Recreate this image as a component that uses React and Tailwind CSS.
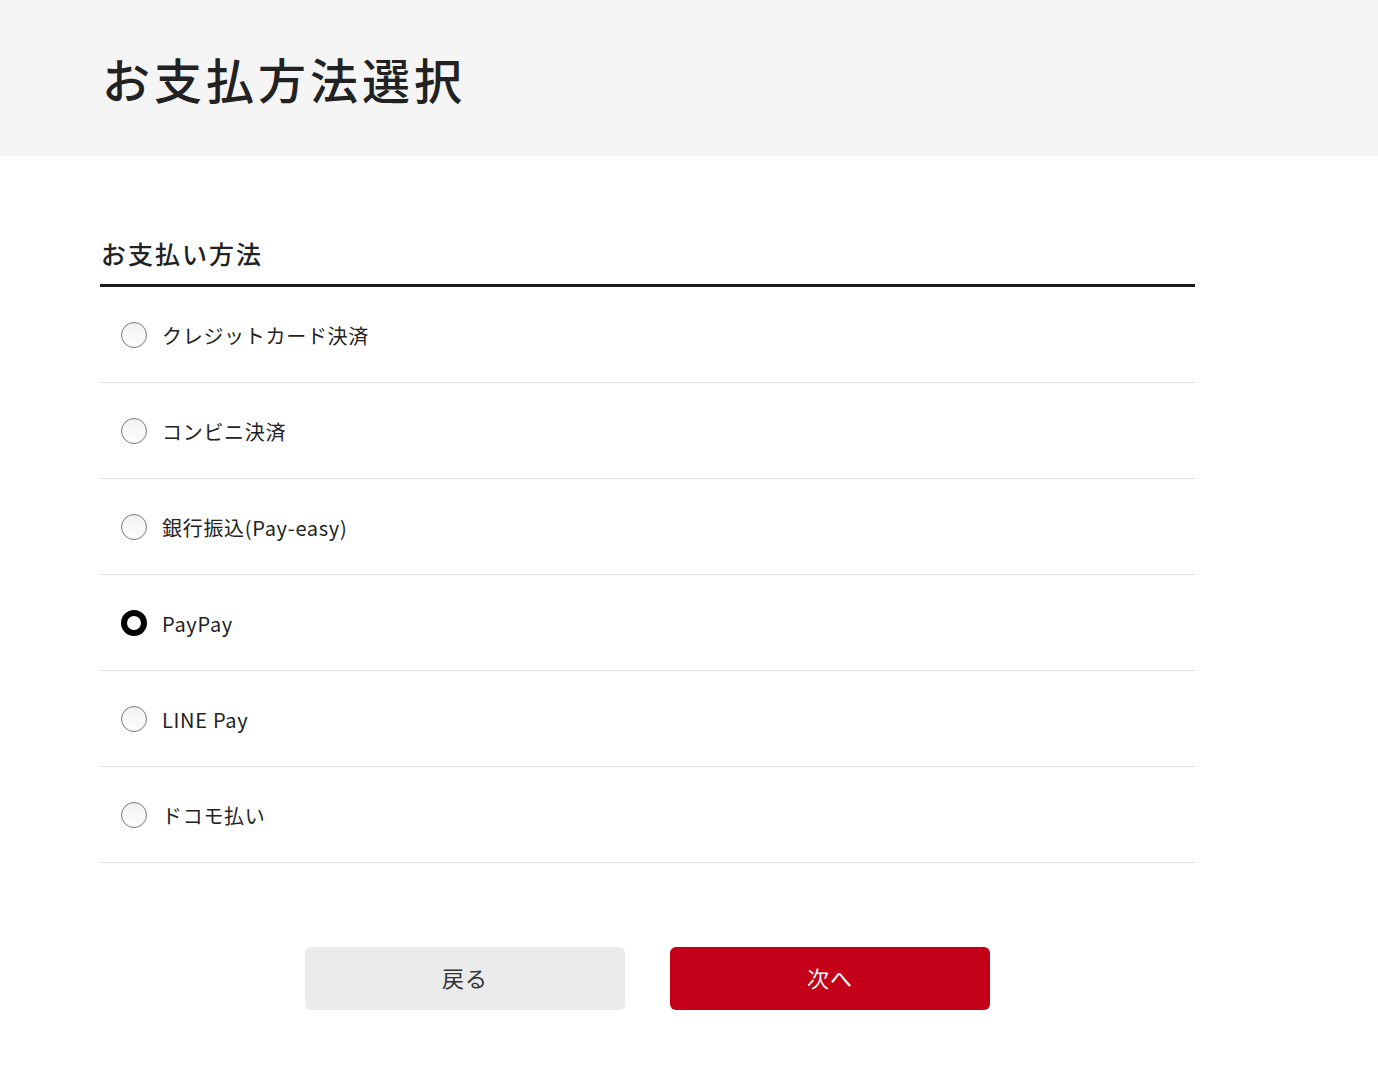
import { useState } from 'react';

const methods = [
  'クレジットカード決済',
  'コンビニ決済',
  '銀行振込(Pay-easy)',
  'PayPay',
  'LINE Pay',
  'ドコモ払い',
];

const App = () => {
  const [selected, setSelected] = useState('PayPay');

  return (
    <div className="min-h-screen bg-white text-[#222] font-['Noto_Sans_CJK_JP','Noto_Sans',sans-serif]">
      <header className="h-[156px] bg-[#f5f5f5] flex items-center pl-[102px]">
        <h1 className="text-[48px] font-medium tracking-[4px] leading-none">お支払方法選択</h1>
      </header>

      <main className="w-[1095px] ml-[100px] pt-[81px] pb-[71px]">
        <h2 className="text-[25px] leading-8 tracking-[2px] pb-[15px] pl-[1px] font-medium border-b-[3px] border-[#1c1c1c]">お支払い方法</h2>

        <div>
          {methods.map((m) => {
            const checked = selected === m;
            return (
              <label
                key={m}
                className="h-[96px] flex items-center pl-[21px] gap-[15px] border-b border-[#e2e2e2] cursor-pointer"
                onClick={() => setSelected(m)}
              >
                <span
                  className={
                    checked
                      ? 'w-[26px] h-[26px] rounded-full border-[6px] border-black bg-white'
                      : 'w-[26px] h-[26px] rounded-full border border-[#7a7a7a] bg-gradient-to-b from-[#f2f2f2] to-white'
                  }
                />
                <span className="text-xl tracking-[0.7px] pt-[2px]">{m}</span>
              </label>
            );
          })}
        </div>

        <div className="flex justify-center gap-[45px] mt-[84px]">
          <button className="w-[320px] h-[63px] pb-[3px] rounded-md bg-[#ebebeb] text-[22px] tracking-[1px] text-[#333]">戻る</button>
          <button className="w-[320px] h-[63px] pb-[3px] rounded-md bg-[#c40018] text-[22px] tracking-[1px] text-white">次へ</button>
        </div>
      </main>
    </div>
  );
};

export default App;
